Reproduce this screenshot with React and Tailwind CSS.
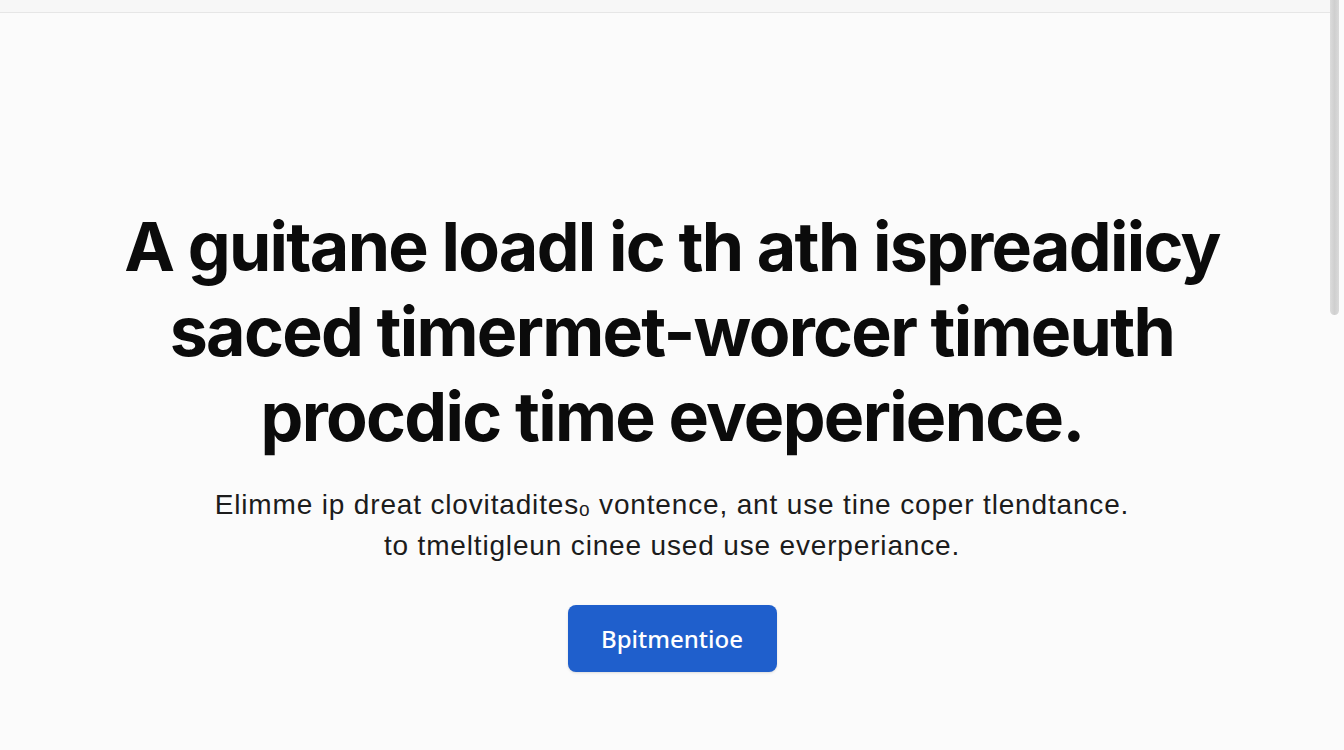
export default function App() {
  return (
    <div className="relative h-[750px] w-[1344px] overflow-hidden bg-[#fbfbfb] font-['Inter',sans-serif]">
      {/* top bar edge */}
      <div className="mr-[14px] h-[13px] border-b border-[#e6e6e6] bg-[#f7f7f7]" />

      {/* scrollbar thumb */}
      <div className="absolute right-[5px] top-0 h-[315px] w-[9px] rounded-b-full bg-gradient-to-r from-[#dcdcdc] via-[#cfcfcf] to-[#dadada]" />

      <main className="flex flex-col items-center pt-[191px]">
        <h1 className="text-center text-[68px] font-bold leading-[85px] tracking-[-0.025em] text-[#0b0b0b]">
          A guitane loadl ic th ath ispreadiicy
          <br />
          saced timermet-worcer timeuth
          <br />
          procdic time eveperience.
        </h1>

        <p className="mt-[25px] text-center font-['Liberation_Sans',sans-serif] text-[28px] leading-[41px] tracking-[0.03em] text-[#1c1c1c]">
          Elimme ip dreat clovitadites&#x2092; vontence, ant use tine coper tlendtance.
          <br />
          to tmeltigleun cinee used use everperiance.
        </p>

        <button className="mt-[39px] h-[67px] w-[209px] rounded-[8px] bg-[#1f5fcc] font-['Noto_Sans',sans-serif] text-[24px] font-medium text-white shadow-sm">
          Bpitmentioe
        </button>
      </main>
    </div>
  )
}
